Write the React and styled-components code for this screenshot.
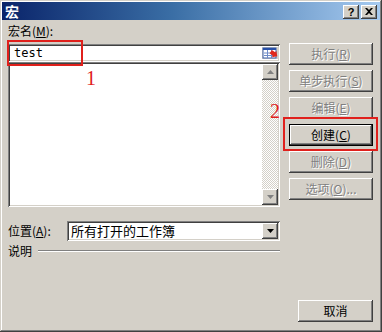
import styled, { createGlobalStyle, css } from "styled-components";

const GlobalStyle = createGlobalStyle`
  html, body {
    margin: 0;
    padding: 0;
    background: #d4d0c8;
  }
  body {
    font-family: "Noto Sans CJK SC", "Liberation Sans", sans-serif;
    font-size: 12px;
    color: #000;
  }
`;

const raised = css`
  background: #d4d0c8;
  box-shadow: inset -1px -1px #404040, inset 1px 1px #ffffff,
    inset -2px -2px #808080, inset 2px 2px #d4d0c8;
`;

const sunken = css`
  background: #ffffff;
  box-shadow: inset 1px 1px #808080, inset -1px -1px #ffffff,
    inset 2px 2px #404040, inset -2px -2px #d4d0c8;
`;

const App = () => {
  return (
    <>
      <GlobalStyle />
      <Window>
        <TitleBar>
          <Title>宏</Title>
          <TitleButtons>
            <TitleButton>?</TitleButton>
            <TitleButton>
              <svg width="8" height="7" viewBox="0 0 8 7">
                <path d="M0 0h2l2 2 2-2h2L5 3.5 8 7H6L4 5 2 7H0l3-3.5z" fill="#000" />
              </svg>
            </TitleButton>
          </TitleButtons>
        </TitleBar>
        <Body>
          <Main>
            <LeftColumn>
              <FieldLabel>
                宏名(<u>M</u>):
              </FieldLabel>
              <NameInput>
                <span>test</span>
                <CollapseIcon />
              </NameInput>
              <ListBox>
                <ScrollBar>
                  <ArrowButton>
                    <Arrow up color="#808080" />
                  </ArrowButton>
                  <Track />
                  <ArrowButton>
                    <Arrow color="#808080" />
                  </ArrowButton>
                </ScrollBar>
              </ListBox>
              <LocationRow>
                <span>
                  位置(<u>A</u>):
                </span>
                <Select>
                  <span>所有打开的工作簿</span>
                  <DropButton>
                    <Arrow color="#000" />
                  </DropButton>
                </Select>
              </LocationRow>
              <DescRow>
                <span>说明</span>
                <Etch />
              </DescRow>
            </LeftColumn>
            <ButtonColumn>
              <Button disabled>
                执行(<u>R</u>)
              </Button>
              <Button disabled>
                单步执行(<u>S</u>)
              </Button>
              <Button disabled>
                编辑(<u>E</u>)
              </Button>
              <Button isDefault>
                创建(<u>C</u>)
              </Button>
              <Button disabled>
                删除(<u>D</u>)
              </Button>
              <Button disabled>
                选项(<u>O</u>)...
              </Button>
            </ButtonColumn>
          </Main>
          <Footer>
            <Button wide>取消</Button>
          </Footer>
        </Body>
        <Mark style={{ left: 7, top: 40, width: 76, height: 26 }} />
        <Mark style={{ left: 283, top: 117, width: 95, height: 34 }} />
        <Number style={{ left: 86, top: 68 }}>1</Number>
        <Number style={{ left: 270, top: 101 }}>2</Number>
      </Window>
    </>
  );
};

const Arrow = ({ up, color }) => (
  <svg width="7" height="4" viewBox="0 0 7 4">
    {up ? (
      <path d="M3.5 0L7 4H0z" fill={color} />
    ) : (
      <path d="M0 0h7L3.5 4z" fill={color} />
    )}
  </svg>
);

const CollapseIcon = () => (
  <svg width="16" height="12" viewBox="0 0 16 12" style={{ flexShrink: 0 }}>
    <rect x="0" y="0" width="16" height="12" fill="#d4d0c8" />
    <rect x="1" y="1" width="13" height="10" fill="#ffffff" stroke="#3a5fa8" strokeWidth="1" />
    <rect x="1" y="1" width="13" height="2" fill="#2850a8" />
    <path d="M2 6h11M2 8.5h11M5.5 3v8M9.5 3v8" stroke="#6f8cc8" strokeWidth="1" />
    <path d="M8 5h4v-2l4 4-4 4v-2H8z" fill="#e0281c" transform="rotate(35 12 7)" />
  </svg>
);

export default App;

const Window = styled.div`
  position: relative;
  box-sizing: border-box;
  width: 382px;
  height: 332px;
  padding: 2px;
  display: flex;
  flex-direction: column;
  background: #d4d0c8;
  box-shadow: inset -1px -1px #404040, inset 1px 1px #d4d0c8,
    inset -2px -2px #808080, inset 2px 2px #ffffff;
`;

const TitleBar = styled.div`
  height: 18px;
  display: flex;
  align-items: center;
  justify-content: space-between;
  padding: 0 3px 0 3px;
  background: linear-gradient(90deg, #0a246a 0%, #3a6ea5 45%, #a6caf0 100%);
`;

const Title = styled.div`
  color: #ffffff;
  font-weight: bold;
  font-size: 14px;
  line-height: 18px;
`;

const TitleButtons = styled.div`
  display: flex;
  gap: 2px;
  padding-top: 1px;
`;

const TitleButton = styled.div`
  ${raised};
  width: 16px;
  height: 14px;
  display: flex;
  align-items: center;
  justify-content: center;
  font-family: "Liberation Sans", sans-serif;
  font-weight: bold;
  font-size: 11px;
  line-height: 14px;
`;

const Body = styled.div`
  flex: 1;
  display: flex;
  flex-direction: column;
  padding: 0 6px 8px 6px;
`;

const Main = styled.div`
  display: flex;
  align-items: flex-start;
`;

const LeftColumn = styled.div`
  width: 272px;
  display: flex;
  flex-direction: column;
`;

const FieldLabel = styled.div`
  height: 24px;
  box-sizing: border-box;
  padding-top: 4px;
  line-height: 14px;
`;

const NameInput = styled.div`
  ${sunken};
  height: 18px;
  box-sizing: border-box;
  display: flex;
  align-items: center;
  justify-content: space-between;
  padding: 0 2px 0 6px;
  font-family: "DejaVu Sans Mono", "Liberation Mono", monospace;
  font-size: 12px;
`;

const ListBox = styled.div`
  ${sunken};
  height: 145px;
  box-sizing: border-box;
  display: flex;
  justify-content: flex-end;
  padding: 2px;
`;

const ScrollBar = styled.div`
  width: 16px;
  display: flex;
  flex-direction: column;
`;

const ArrowButton = styled.div`
  ${raised};
  width: 16px;
  height: 16px;
  display: flex;
  align-items: center;
  justify-content: center;
`;

const Track = styled.div`
  flex: 1;
  background: repeating-conic-gradient(#ffffff 0 25%, #d4d0c8 0 50%) 0 0 / 2px 2px;
`;

const LocationRow = styled.div`
  margin-top: 14px;
  display: flex;
  align-items: center;
  justify-content: space-between;
  line-height: 14px;
`;

const Select = styled.div`
  ${sunken};
  width: 213px;
  height: 20px;
  box-sizing: border-box;
  display: flex;
  align-items: center;
  justify-content: space-between;
  padding: 2px 2px 2px 4px;
  font-size: 13px;
`;

const DropButton = styled(ArrowButton)`
  height: 16px;
`;

const DescRow = styled.div`
  margin-top: 3px;
  height: 14px;
  display: flex;
  align-items: center;
  gap: 6px;
  line-height: 14px;
`;

const Etch = styled.div`
  flex: 1;
  height: 0;
  border-top: 1px solid #808080;
  border-bottom: 1px solid #ffffff;
`;

const ButtonColumn = styled.div`
  margin-left: 9px;
  padding-top: 23px;
  display: flex;
  flex-direction: column;
  gap: 5px;
`;

const Button = styled.div`
  ${raised};
  width: ${(p) => (p.wide ? "75px" : "84px")};
  height: 22px;
  box-sizing: border-box;
  display: flex;
  align-items: center;
  justify-content: center;
  line-height: 14px;
  color: ${(p) => (p.disabled ? "#808080" : "#000")};
  text-shadow: ${(p) => (p.disabled ? "1px 1px #ffffff" : "none")};
  ${(p) =>
    p.isDefault &&
    css`
      box-shadow: inset 0 0 0 1px #000, inset -2px -2px #404040,
        inset 2px 2px #ffffff, inset -3px -3px #808080;
    `}
`;

const Footer = styled.div`
  margin-top: auto;
  display: flex;
  justify-content: flex-end;
  padding-right: 1px;
`;

const Mark = styled.div`
  position: absolute;
  box-sizing: border-box;
  border: 2px solid #e0201c;
  pointer-events: none;
`;

const Number = styled.div`
  position: absolute;
  color: #e0201c;
  font-family: "Liberation Serif", serif;
  font-size: 20px;
  line-height: 20px;
`;
